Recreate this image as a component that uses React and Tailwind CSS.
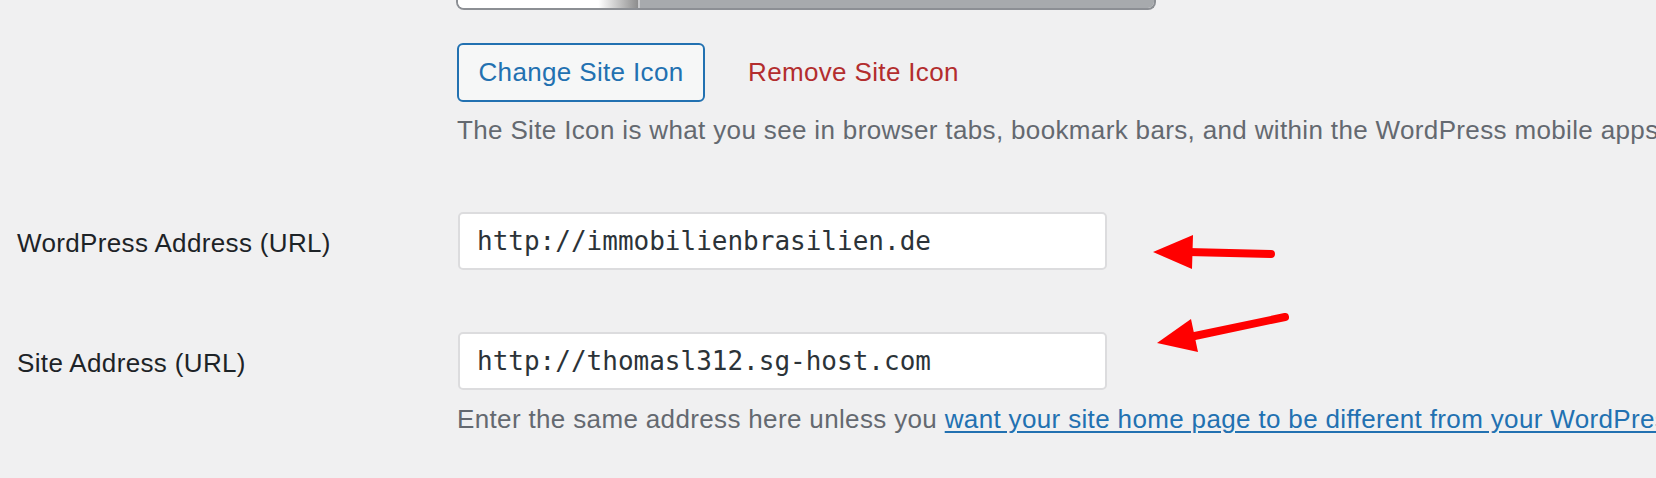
import React from "react";

const sans = "font-['Liberation_Sans',Arial,sans-serif]";
const mono = "font-['DejaVu_Sans_Mono','Liberation_Mono',monospace]";

function Arrows() {
  return (
    <svg
      className="absolute inset-0 pointer-events-none"
      width="1656"
      height="478"
      viewBox="0 0 1656 478"
    >
      <line x1="1188" y1="252" x2="1271" y2="254" stroke="#ff0000" strokeWidth="8" strokeLinecap="round" />
      <polygon points="1153,252 1193,235 1192,269" fill="#ff0000" />
      <line x1="1190" y1="337" x2="1285" y2="317" stroke="#ff0000" strokeWidth="8" strokeLinecap="round" />
      <polygon points="1157,343 1191,319 1198,352" fill="#ff0000" />
    </svg>
  );
}

function FieldRow({ label, value, className }) {
  return (
    <div className={`flex items-center ${className}`}>
      <div className="w-[457px] pl-[17px] pt-[3px] text-[26px] leading-[36px] text-[#1d2327]">
        {label}
      </div>
      <input
        readOnly
        value={value}
        className={`ml-[1px] w-[649px] h-[58px] bg-white border-2 border-[#dcdcde] rounded-[5px] px-[17px] text-[26px] tracking-normal text-[#2c3338] ${mono} focus:outline-none`}
      />
    </div>
  );
}

export default function App() {
  return (
    <div className={`relative w-[1656px] h-[478px] overflow-hidden bg-[#f0f0f1] tracking-[0.35px] ${sans}`}>
      {/* Site icon */}
      <div className="pl-[456px]">
        <div className="flex w-[700px] h-[10px] border-x-2 border-b-2 border-[#8c8f94] rounded-b-[8px] overflow-hidden">
          <div className="w-[180px] bg-[linear-gradient(to_right,#ffffff_78%,#8d8d8d_100%)]" />
          <div className="w-[2px] bg-[#c9cacc]" />
          <div className="flex-1 bg-[#a7aaad]" />
        </div>

        <div className="flex items-center mt-[33px] pl-[1px]">
          <button className="w-[248px] h-[59px] border-2 border-[#2271b1] rounded-[6px] bg-[#f6f7f7] text-[#2271b1] text-[26px]">
            Change Site Icon
          </button>
          <a href="#" className="ml-[43px] text-[26px] text-[#b32d2e]">
            Remove Site Icon
          </a>
        </div>

        <p className="mt-[10px] pl-[1px] text-[26px] leading-[36px] text-[#646970] whitespace-nowrap">
          The Site Icon is what you see in browser tabs, bookmark bars, and within the WordPress mobile apps. Upload one here!
        </p>
      </div>

      <FieldRow label="WordPress Address (URL)" value="http://immobilienbrasilien.de" className="mt-[64px]" />
      <FieldRow label="Site Address (URL)" value="http://thomasl312.sg-host.com" className="mt-[62px]" />

      <p className="mt-[11px] pl-[457px] text-[26px] leading-[36px] text-[#646970] whitespace-nowrap">
        Enter the same address here unless you{" "}
        <a href="#" className="text-[#2271b1] underline underline-offset-[3px]">
          want your site home page to be different from your WordPress address
        </a>
        .
      </p>

      <Arrows />
    </div>
  );
}
